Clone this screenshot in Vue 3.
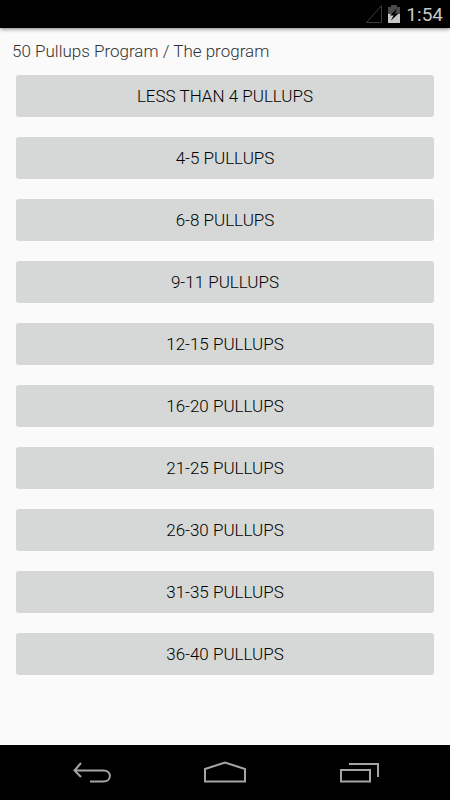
<template>
  <div class="screen">
    <header class="status-bar">
      <svg class="signal" width="18" height="20" viewBox="0 0 18 20" aria-hidden="true">
        <path d="M16.5 1.5V18.5H1.5Z" fill="none" stroke="#3c3c3c" />
      </svg>
      <svg class="battery" width="12" height="20" viewBox="0 0 12 20" aria-hidden="true">
        <path d="M3 1H9V3H12V10H0V3H3Z" fill="#4a4a4a" />
        <path d="M0 10H12V19H0Z" fill="#c6c6c6" />
        <path d="M9 4.500L2 11.500H5.500L3 16.500L10.500 9.500H7Z" fill="#000" />
      </svg>
      <time class="clock">1:54</time>
    </header>

    <main class="content">
      <h1 class="title">50 Pullups Program / The program</h1>
      <div class="levels">
        <button v-for="level in levels" :key="level" type="button" class="level-btn"
                @click="selectLevel(level)">
          {{ level }} pullups
        </button>
      </div>
    </main>

    <nav class="nav-bar">
      <button type="button" class="nav-btn" aria-label="Back">
        <svg width="42" height="24" viewBox="0 0 42 24">
          <path d="M11 2L4.500 9.500L11 16M5 9.500H33.500C42 9.500 42 20.500 33.500 20.500H20" />
        </svg>
      </button>
      <button type="button" class="nav-btn" aria-label="Home">
        <svg width="42" height="24" viewBox="0 0 42 24">
          <path d="M1 20.500V8L21 1.500L41 8V20.500Z" />
        </svg>
      </button>
      <button type="button" class="nav-btn" aria-label="Recent apps">
        <svg width="42" height="24" viewBox="0 0 42 24">
          <path d="M3 9H32V20.500H3ZM11 3H40V16" />
        </svg>
      </button>
    </nav>
  </div>
</template>

<script setup>
import { ref } from 'vue';

const selected = ref(null);

const levels = [
  'Less than 4',
  '4-5',
  '6-8',
  '9-11',
  '12-15',
  '16-20',
  '21-25',
  '26-30',
  '31-35',
  '36-40'
];

function selectLevel(level) {
  selected.value = level;
}
</script>

<style>
body {
  margin: 0;
  background: #fafafa;
}
</style>

<style scoped>
.screen {
  min-height: 100vh;
  display: flex;
  flex-direction: column;
  background: #fafafa;
  font-family: Roboto, sans-serif;
}

.status-bar {
  height: 28px;
  padding: 0 7px;
  display: flex;
  align-items: center;
  justify-content: flex-end;
  background: #000;
  box-shadow: 0 1px 4px rgba(0, 0, 0, 0.5);
}

.battery {
  margin: 0 6px 0 5px;
}

.clock {
  color: #c8c8c8;
  font-size: 19px;
  line-height: 28px;
  padding-top: 2px;
}

.content {
  flex: 1;
  padding: 12px;
}

.title {
  margin: 0;
  color: #333;
  font-size: 17px;
  font-weight: 300;
  line-height: 23px;
}

.levels {
  display: flex;
  flex-direction: column;
  gap: 20px;
  padding: 12px 4px;
}

.level-btn {
  height: 42px;
  padding: 0 8px;
  border: none;
  border-radius: 3px;
  background: #d6d8d7;
  color: #000;
  font-family: inherit;
  font-size: 17px;
  font-weight: 300;
  text-transform: uppercase;
  cursor: pointer;
}

.level-btn:active {
  background: #c4c6c5;
}

.nav-bar {
  height: 55px;
  display: flex;
  align-items: center;
  justify-content: center;
  background: #000;
}

.nav-btn {
  width: 134px;
  height: 55px;
  padding: 4px 0 0;
  border: none;
  background: none;
  cursor: pointer;
}

.nav-btn svg {
  fill: none;
  stroke: #a5a5a5;
  stroke-width: 2;
}
</style>
